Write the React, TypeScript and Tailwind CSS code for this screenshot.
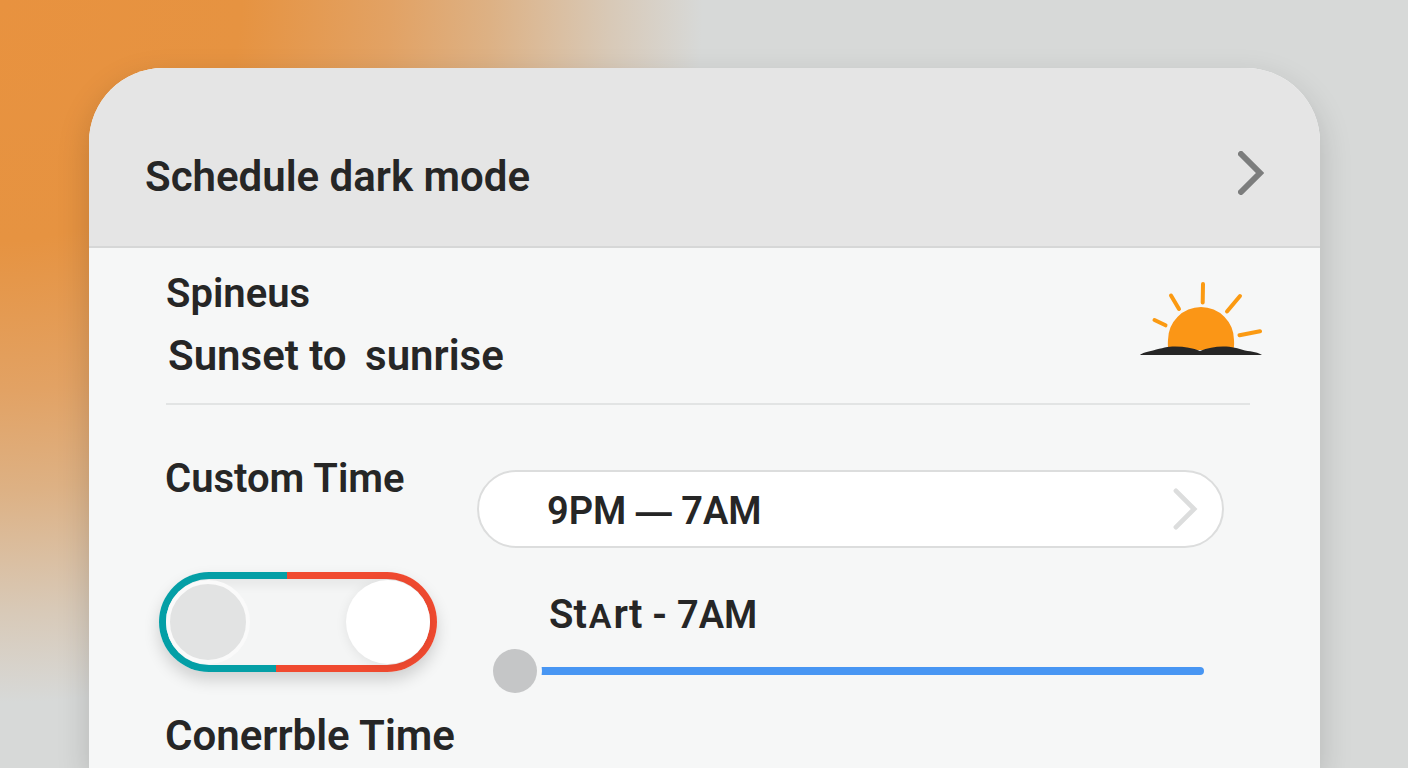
import React, { useState } from 'react';

interface ChevronProps {
  className: string;
  strokeWidth: number;
}

const Chevron: React.FC<ChevronProps> = ({ className, strokeWidth }) => (
  <svg
    viewBox="0 0 26 44"
    className={className}
    fill="none"
    stroke="currentColor"
    strokeWidth={strokeWidth}
    strokeLinecap="round"
    aria-hidden="true"
  >
    <path d="M3 3 22 22 3 41" />
  </svg>
);

const SunIcon: React.FC = () => (
  <svg viewBox="0 0 122 75" className="w-[122px] h-[75px] shrink-0" aria-hidden="true">
    <g stroke="#fb9a12" strokeWidth="4" strokeLinecap="round">
      <path d="M63 3 62.7 21.5" />
      <path d="M31 14.5 39 28" />
      <path d="M100 15 87 30.5" />
      <path d="M14.5 39 25.5 44.3" />
      <path d="M120 50.2 99.5 54.2" />
    </g>
    <path d="M28.5 69C27.5 64 28 60 28 59a33 33 0 0 1 66 0c0 1 .5 5-.5 10Z" fill="#fb9616" />
    <path
      d="M0 74C2 72 7 71 13 69.5 22 67 28 65.5 35 65.5 45 65.5 53 67 60 70 67 67 75 65.5 83 65.5 92 65.5 98 67.5 105 69.5 112 70.5 119 71.5 122 74Z"
      fill="#262626"
    />
  </svg>
);

const ScheduleToggle: React.FC = () => {
  const [enabled, setEnabled] = useState(true);

  return (
    <label className="relative block w-[278px] h-[100px] p-[7px] rounded-full bg-[linear-gradient(90deg,#049fa6_128px,#f04a30_128px),linear-gradient(90deg,#049fa6_117px,#f04a30_117px)] bg-[length:100%_50%] bg-[position:top,bottom] bg-no-repeat shadow-[0_8px_16px_rgba(0,0,0,0.16)] cursor-pointer">
      <input
        type="checkbox"
        role="switch"
        aria-label="Custom Time"
        checked={enabled}
        onChange={(e) => setEnabled(e.target.checked)}
        className="absolute inset-0 w-full h-full opacity-0 cursor-pointer"
      />
      <span className="flex items-center justify-between h-full rounded-full bg-[#f4f5f5] shadow-[inset_0_6px_12px_rgba(0,0,0,0.06)]">
        <span className="w-[84px] h-[84px] rounded-full border-4 border-[#fafafa] bg-[#e2e3e3]" />
        <span className="w-[84px] h-[84px] rounded-full bg-white shadow-[0_2px_12px_rgba(0,0,0,0.08)]" />
      </span>
    </label>
  );
};

const App: React.FC = () => {
  const [start, setStart] = useState(0);

  return (
    <div className="flex flex-col min-h-screen pl-[89px] pr-[88px] pt-[68px] overflow-hidden bg-[#d7d9d8] bg-[radial-gradient(ellipse_710px_710px_at_0_0,#e8923f_0%,#e69341_34%,#e2a264_55%,#ddb184_69%,#d8c9b7_86%,#d7d9d8_99%)] font-['Roboto','Liberation_Sans',sans-serif] font-semibold text-[#262626]">
      <main className="flex flex-col flex-1 rounded-t-[74px] bg-[#f6f7f7] shadow-[0_12px_32px_rgba(0,0,0,0.17)]">
        <header className="flex items-center justify-between h-[180px] px-[56px] pt-8 rounded-t-[74px] bg-[#e5e5e5] border-b-2 border-[#d6d7d7]">
          <h1 className="pt-2 text-[42px] leading-[48px]">Schedule dark mode</h1>
          <button type="button" aria-label="Open schedule" className="text-[#7c7d7d]">
            <Chevron className="w-[26px] h-[44px]" strokeWidth={6} />
          </button>
        </header>

        <div className="px-[70px]">
          {/* Sunset to sunrise */}
          <section className="flex items-start justify-between h-[157px] ml-[7px] pt-[22px] border-b-2 border-[#e2e4e4]">
            <div>
              <h2 className="text-[40px] leading-[48px]">Spineus</h2>
              <p className="mt-3.5 pl-0.5 text-[42px] leading-[48px]">
                Sunset to <span className="pl-2">sunrise</span>
              </p>
            </div>
            <div className="-mr-3 pt-[11px]">
              <SunIcon />
            </div>
          </section>

          {/* Custom time */}
          <section className="grid grid-cols-[318px_1fr] pt-[65px] pr-[26px]">
            <div>
              <h2 className="pl-1.5 text-[40px] leading-[48px] -mt-[15px]">Custom Time</h2>
              <div className="mt-[69px]">
                <ScheduleToggle />
              </div>
              <h2 className="pl-1.5 mt-10 text-[42px] leading-[48px]">Conerrble Time</h2>
            </div>

            <div>
              <button
                type="button"
                className="flex items-center justify-between w-full h-[78px] pl-[68px] pr-6 rounded-full border-2 border-[#dcdddd] bg-white text-[38px] leading-[48px]"
              >
                <span className="pt-1">
                  9PM <span className="font-['Liberation_Sans'] text-[36px]">—</span> 7AM
                </span>
                <Chevron className="w-[25px] h-[42px] text-[#dcdddd]" strokeWidth={5} />
              </button>

              <label htmlFor="start" className="block mt-[43px] pl-[72px] text-[40px] leading-[48px]">
                St<span className="px-0.5 text-[34px]">A</span>rt - <span className="text-[38px]">7AM</span>
              </label>
              <div className="mt-[9px] pl-4 pr-5">
                <input
                  id="start"
                  type="range"
                  min={0}
                  max={100}
                  value={start}
                  onChange={(e) => setStart(Number(e.target.value))}
                  className="block w-full h-[44px] appearance-none bg-transparent cursor-pointer [&::-webkit-slider-runnable-track]:h-[8px] [&::-webkit-slider-runnable-track]:rounded-full [&::-webkit-slider-runnable-track]:bg-[linear-gradient(90deg,transparent_22px,#4896f3_22px)] [&::-webkit-slider-thumb]:appearance-none [&::-webkit-slider-thumb]:w-[44px] [&::-webkit-slider-thumb]:h-[44px] [&::-webkit-slider-thumb]:-mt-[18px] [&::-webkit-slider-thumb]:rounded-full [&::-webkit-slider-thumb]:bg-[#c5c6c7] [&::-webkit-slider-thumb]:shadow-[0_0_0_5px_#f6f7f7]"
                />
              </div>
            </div>
          </section>
        </div>
      </main>
    </div>
  );
};

export default App;
